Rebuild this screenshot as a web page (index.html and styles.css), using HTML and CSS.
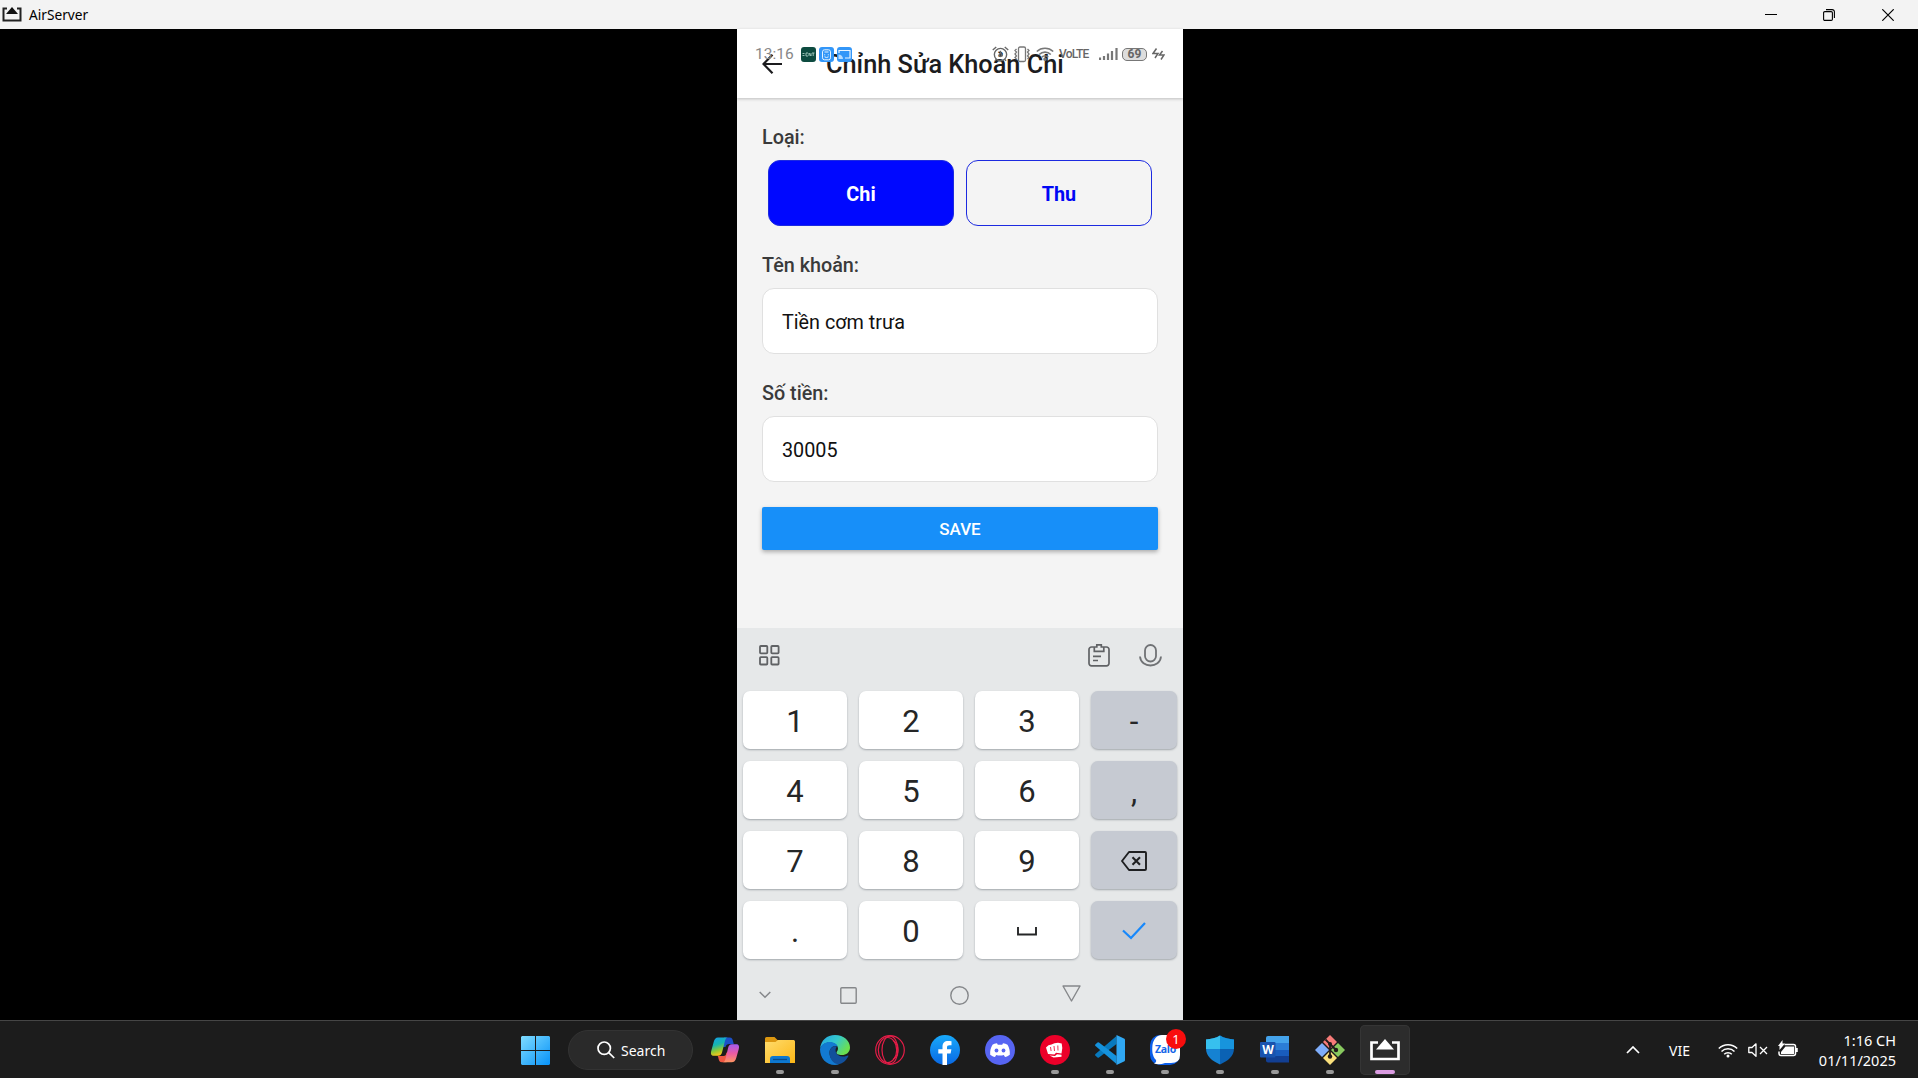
FILE: index.html
```html
<!DOCTYPE html>
<html lang="vi">
<head>
<meta charset="utf-8">
<title>AirServer</title>
<link rel="stylesheet" href="styles.css">
</head>
<body>
<header class="titlebar">
  <svg class="titlebar-logo" width="20" height="15" viewBox="0 0 20 15"><path d="M5 1.5H1.5v12h17v-12H15" fill="none" stroke="#222" stroke-width="2"/><path d="M10 0l6 7H4z" fill="#111"/></svg>
  <span class="titlebar-name">AirServer</span>
  <div class="window-controls">
    <svg width="12" height="12" viewBox="0 0 12 12"><path d="M0 5.5h12" stroke="#000"/></svg>
    <svg width="12" height="12" viewBox="0 0 12 12" fill="none" stroke="#000" stroke-width="1.1"><rect x=".6" y="2.6" width="8.8" height="8.8" rx="1.2"/><path d="M3 .6h6.200a2.200 2.200 0 0 1 2.200 2.200V9"/></svg>
    <svg width="12" height="12" viewBox="0 0 12 12"><path d="M.3.3l11.4 11.4M11.700.3L.3 11.700" stroke="#000" stroke-width="1.2"/></svg>
  </div>
</header>

<main class="stage">
  <section class="phone">
    <div class="app-header">
      <svg class="back" width="20" height="20" viewBox="0 0 20 20" fill="none" stroke="#1c1c1e" stroke-width="2.200"><path d="M20 10H2M10.500.8L1.500 10l9 9.200"/></svg>
      <h1 class="app-title">Chỉnh Sửa Khoản Chi</h1>
      <div class="status">
        <span class="status-time">13:16</span>
        <div class="status-apps">
          <svg width="15" height="15" viewBox="0 0 15 15"><rect width="15" height="15" rx="3" fill="#0d4b40"/><path d="M1.500 6.500h2M1.500 8.500h2M5 6v3M5 6h2M5 9h2M8 9V6l2 3V6M11 6h2.500M12.200 6v3" stroke="#a9cfc4" stroke-width=".9" fill="none"/></svg>
          <svg width="15" height="15" viewBox="0 0 15 15"><rect width="15" height="15" rx="3" fill="#3296f8"/><path d="M5.500 2.800h4a2 2 0 0 1 2 2v6a2 2 0 0 1-2 2h-4a2 2 0 0 1-2-2v-6a2 2 0 0 1 2-2zM5.500 5h4M5.700 7.300v1M9.300 7.300v1M5.500 9.800q2 1.500 4 0" fill="none" stroke="#e8f4ff"/></svg>
          <svg width="15" height="15" viewBox="0 0 15 15"><rect width="15" height="15" rx="3" fill="#3296f8"/><path d="M2 6V3.500h11V11H8" fill="none" stroke="#e8f4ff" stroke-width="1.200"/><path d="M1.500 7.500a4.500 4.500 0 0 1 4.500 4.500H1.500z" fill="#b7dcff"/></svg>
        </div>
        <div class="status-icons">
          <svg width="17" height="16" viewBox="0 0 16 15" fill="none" stroke="#666" stroke-width="1.300"><circle cx="8" cy="8" r="5.800"/><path d="M.7 3.800L4 1M15.300 3.800L12 1M8 4.500V8l2 1.500M4 12.500L2.800 14M12 12.500l1.200 1.500"/><circle cx="8" cy="8.500" r="1.300" fill="#333"/></svg>
          <svg width="16" height="17" viewBox="0 0 16 17" fill="none" stroke="#777" stroke-width="1.300"><rect x="4.500" y="1" width="7" height="14.500" rx="1.500"/><path d="M2.500 3L1 4.500 2.500 6 1 8l1.500 2L1 11.500 2.500 13M13.500 3L15 4.500 13.500 6 15 8l-1.500 2 1.500 1.500-1.500 1.500"/></svg>
          <svg width="18" height="14" viewBox="0 0 18 14" fill="none" stroke="#777" stroke-width="1.600"><path d="M.8 4.500a12 12 0 0 1 16.400 0M3.200 7.500a8.300 8.300 0 0 1 11.600 0M5.800 10.200a4.700 4.700 0 0 1 6.400 0"/><circle cx="9" cy="12.200" r="1" fill="#666"/></svg>
          <span class="volte">VoLTE</span>
          <svg class="signal" width="19" height="12" viewBox="0 0 19 12" stroke="#777" stroke-width="2.200"><path d="M1 12V9.500M5 12V8M9 12V5.500M13 12V3M17.500 12V0"/></svg>
          <span class="battery">69</span>
          <svg class="bolt" width="13" height="12" viewBox="0 0 13 12" fill="none" stroke="#666" stroke-width="1.500"><path d="M4.500.5L1 5.500h5L3 10M10.500 3L7.500 7h4.500l-3 4.500"/></svg>
        </div>
      </div>
    </div>

    <div class="form">
      <div class="label">Loại:</div>
      <div class="types">
        <button class="type type-on">Chi</button>
        <button class="type">Thu</button>
      </div>
      <div class="label">Tên khoản:</div>
      <div class="field">Tiền cơm trưa</div>
      <div class="label">Số tiền:</div>
      <div class="field">30005</div>
      <button class="save">SAVE</button>
    </div>

    <div class="keyboard">
      <div class="kb-tools">
        <svg width="21" height="21" viewBox="0 0 21 21" fill="none" stroke="#606265" stroke-width="1.800"><rect x="1" y="1" width="7.300" height="7.300" rx=".8"/><rect x="12.300" y="1" width="7.300" height="7.300" rx=".8"/><rect x="1" y="12.200" width="7.300" height="7.300" rx=".8"/><rect x="12.300" y="12.200" width="7.300" height="7.300" rx=".8"/></svg>
        <svg class="clip" width="22" height="23" viewBox="0 0 22 23" fill="none" stroke="#606265" stroke-width="1.700"><path d="M6 3H3.500A2.500 2.500 0 0 0 1 5.500v13.800a2.500 2.500 0 0 0 2.500 2.500h15a2.500 2.500 0 0 0 2.500-2.500V5.500A2.500 2.500 0 0 0 18.500 3H16M6.300 7.300V3h2.500V.8h4.500V3h2.500v4.300zM5 12.300h8M5 16.500h5"/></svg>
        <svg width="23" height="23" viewBox="0 0 23 23" fill="none" stroke="#707275" stroke-width="1.800"><rect x="6" y="1" width="11" height="16.500" rx="5.500"/><path d="M1 12.500c1 12 20 12 21 0"/></svg>
      </div>
      <div class="keys">
        <div class="key">1</div><div class="key">2</div><div class="key">3</div><div class="key key-side">-</div>
        <div class="key">4</div><div class="key">5</div><div class="key">6</div><div class="key key-side">,</div>
        <div class="key">7</div><div class="key">8</div><div class="key">9</div>
        <div class="key key-side key-icon"><svg width="26" height="20" viewBox="0 0 26 20" fill="none" stroke="#1e1f21" stroke-width="1.900"><path d="M8 1h16a1 1 0 0 1 1 1v16a1 1 0 0 1-1 1H8l-7-9z" stroke-linejoin="round"/><path d="M11.500 6.300l7.500 7.500M19 6.300l-7.500 7.500" stroke-width="2.100"/></svg></div>
        <div class="key">.</div><div class="key">0</div>
        <div class="key key-icon"><svg width="20" height="9" viewBox="0 0 20 9"><path d="M1 0v7.500h18V0" fill="none" stroke="#252627" stroke-width="1.900"/></svg></div>
        <div class="key key-side key-icon"><svg width="24" height="18" viewBox="0 0 24 18"><path d="M1 8.500l8 7.500L23 1" fill="none" stroke="#1788fb" stroke-width="2.200"/></svg></div>
      </div>
      <div class="nav">
        <svg width="12" height="8" viewBox="0 0 12 8"><path d="M.7 1L6 6.300 11.300 1" fill="none" stroke="#85878a" stroke-width="1.500"/></svg>
        <svg class="nav-square" width="17" height="17" viewBox="0 0 17 17"><rect x=".8" y=".8" width="15.400" height="15.400" rx="1" fill="none" stroke="#85878a" stroke-width="1.400"/></svg>
        <svg class="nav-circle" width="19" height="19" viewBox="0 0 19 19"><circle cx="9.500" cy="9.500" r="8.700" fill="none" stroke="#85878a" stroke-width="1.400"/></svg>
        <svg class="nav-tri" width="19" height="17" viewBox="0 0 19 17"><path d="M1 1h17L9.500 16z" fill="none" stroke="#85878a" stroke-width="1.400" stroke-linejoin="round"/></svg>
      </div>
    </div>
  </section>
</main>

<footer class="taskbar">
  <div class="start">
    <svg width="29" height="29" viewBox="0 0 29 29"><defs><linearGradient id="win" x2="1" y2="1"><stop stop-color="#7fdcff"/><stop offset="1" stop-color="#0792f8"/></linearGradient></defs><path d="M1 0h13v14H0V1zM15 0h13l1 1v13H15zM0 15h14v14H1l-1-1zM15 15h14v13l-1 1H15z" fill="url(#win)"/></svg>
  </div>
  <div class="search">
    <svg width="18" height="18" viewBox="0 0 18 18" fill="none" stroke="#fff" stroke-width="1.700"><circle cx="7.200" cy="7.200" r="6.200"/><path d="M11.700 11.700l5.500 5.300"/></svg>
    <span>Search</span>
  </div>
  <div class="apps">
    <div class="app"><svg width="30" height="30" viewBox="0 0 30 30"><defs><linearGradient id="cpa" x2=".3" y2="1"><stop stop-color="#159de8"/><stop offset=".45" stop-color="#16b5b0"/><stop offset=".75" stop-color="#8cc936"/><stop offset="1" stop-color="#f4c51c"/></linearGradient><linearGradient id="cpb" x2="0" y2="1"><stop stop-color="#a25bf0"/><stop offset=".5" stop-color="#ea5aa4"/><stop offset="1" stop-color="#fd9560"/></linearGradient></defs><path d="M14 2.500h5.500c2.500 0 3 1.500 3.600 4l.7 2.500h-4.300c-2.500 0-3.500 1-4 3h-3z" fill="#1c50c8"/><path d="M7.500 21h6c2 0 2.500-1 3-3.500L18 18l-1.500 9.300H12c-2.500 0-3-1.800-3.500-3.800-.3-1.500-.4-2.200-1-2.500z" fill="#ef5742"/><path d="M8 2.500h10c-2 0-2.700 2-3.300 4.500l-2.500 9.700c-.6 2.500-1.700 4-4 4H4c-3 0-3.500-2-2.700-5l2.400-8.700c.8-3 2-4.500 4.300-4.500z" fill="url(#cpa)"/><path d="M21.500 27.300H12.500c2 0 2.700-2 3.300-4.500l2.200-9.500c.6-2.500 1.700-4 4-4H26c3 0 3.500 2 2.700 5l-2.400 8.500c-.8 3-2.200 4.500-4.800 4.500z" fill="url(#cpb)"/></svg></div>
    <div class="app open"><svg width="30" height="30" viewBox="0 0 30 30"><defs><linearGradient id="fold" x2="1" y2="1"><stop stop-color="#ffdc6d"/><stop offset="1" stop-color="#fcb716"/></linearGradient></defs><path d="M0 3.500Q0 2 1.500 2h8l3 3H29v6H0z" fill="#dc9710"/><path d="M0 7h10.500l2.500-2h15.500Q30 5 30 6.500V28H0z" fill="url(#fold)"/><path d="M5 28v-4q0-3 3-3h14q3 0 3 3v4z" fill="#0d78d0"/><path d="M8 24.500h14" stroke="#084b8a" stroke-width="1.300"/></svg></div>
    <div class="app open"><svg width="30" height="30" viewBox="0 0 30 30"><defs><linearGradient id="edge" x2="1" y2=".5"><stop stop-color="#22a4e5"/><stop offset=".55" stop-color="#35c9cb"/><stop offset="1" stop-color="#6bdf50"/></linearGradient></defs><path d="M0 14C1 5 7 0 15 0c9 0 15 6 15 12.500 0 5-4 7.500-8 7.500-4 0-5.500-1-5.500-2.300s1.500-1.700 1.500-4.200C18 10 14 7.500 9.500 7.500 5 7.500 1.500 10 0 14z" fill="url(#edge)"/><path d="M0 14C1.500 9 5.500 7 9.500 7c4 0 7.200 1.700 8.200 4.500-4-1.500-8.200 1.500-8.200 6.500 0 5.500 5 10.500 10 11-1.500.7-3 1-4.500 1C6 30 0 23 0 14z" fill="#127ad1"/><path d="M9.500 17c.2-3.800 4-6.500 7.500-5.500-3 3-1.500 10 6 10 2.500 0 4-.7 4.800-1 .8 0 .7.500.3 1.200C25.500 26 22.500 29 18 29c-5 0-8.700-6-8.500-12z" fill="#12509b"/></svg></div>
    <div class="app"><svg width="30" height="30" viewBox="0 0 30 30" fill="none" stroke="#e51d48" stroke-width="1.200"><circle cx="15" cy="15" r="14.300"/><ellipse cx="12.500" cy="15" rx="9.200" ry="12.500"/><ellipse cx="15" cy="15" rx="8" ry="13.800"/><path d="M18 5.500c6.500 4 6.500 15 0 19"/></svg></div>
    <div class="app"><svg width="30" height="30" viewBox="0 0 30 30"><defs><linearGradient id="fb" x2="0" y2="1"><stop stop-color="#18a9fa"/><stop offset="1" stop-color="#0968e4"/></linearGradient></defs><circle cx="15" cy="15" r="15" fill="url(#fb)"/><path d="M12.500 30V18.500H8.300v-4.200h4.200V12c0-4.200 2-6 5.700-6 1.500 0 2.800.1 3.300.3v4h-2c-2 0-2.500.8-2.500 2.200v1.800h4.400l-.8 4.200H17V30z" fill="#fff"/></svg></div>
    <div class="app"><svg width="30" height="30" viewBox="0 0 30 30"><circle cx="15" cy="15" r="15" fill="#5765f2"/><path d="M12 8.300c-2 .3-3.300.8-4.500 1.400C5.500 13 5 16 5.200 19.700c1.500 1.200 3.200 1.900 4.800 2.300l1.200-2c2.500.7 5.100.7 7.600 0l1.200 2c1.600-.4 3.300-1.100 4.800-2.300.3-3.700-.5-7-2.300-10-1.200-.6-2.800-1.200-4.500-1.400l-.8 1.400h-4.400z" fill="#fff"/><ellipse cx="11.500" cy="15.500" rx="1.900" ry="2.100" fill="#5765f2"/><ellipse cx="18.500" cy="15.500" rx="1.900" ry="2.100" fill="#5765f2"/></svg></div>
    <div class="app open"><svg width="30" height="30" viewBox="0 0 30 30"><circle cx="15" cy="15" r="15" fill="#ec0029"/><path d="M6 12.500l2.500-2.300 3-.7 3-1.200 3.500-.6 3.700.8.6 4.500-.8 5.500-5.500-.8-1.500 1.800-6.500-.5z" fill="#fff"/><path d="M9.500 20.500l5.500.5 2-1.800 4.500.6v2l-5 .4-3 .3z" fill="#fff"/><path d="M10.500 12l.6 4M14 11l.5 5M17.800 10.500l.2 5" stroke="#ec0029" stroke-width=".8" fill="none"/></svg></div>
    <div class="app open"><svg width="30" height="30" viewBox="0 0 30 30"><path d="M21.500 1v8L4 22.500Q3.300 23 2.500 22.500L.5 20.700q-.8-.8 0-1.700z" fill="#0879bd"/><path d="M21.500 29v-8L4 7.500Q3.300 7 2.500 7.500L.5 9.300q-.8.800 0 1.700z" fill="#1592dc"/><path d="M21.500 0L29 3.500q1 .4 1 1.500v20q0 1-1 1.500L21.500 30z" fill="#30a8f3"/></svg></div>
    <div class="app open zalo"><svg width="30" height="30" viewBox="0 0 30 30"><rect width="30" height="30" rx="10" fill="#0b5eea"/><path d="M12 0h9q9 0 9 9v11q0 8-9 8h-6c-4 1.500-8 1.500-11 .5 2-.7 2.500-2 2-3.500C2 21 2 15 2.500 10 3.500 4 7 0 12 0z" fill="#fff"/></svg><span class="zalo-name">Zalo</span><span class="badge">1</span></div>
    <div class="app open"><svg width="30" height="30" viewBox="0 0 30 30"><path d="M15 .5C11 3 6 4.200 1 4.500v9C1 21 7 26 15 29.500z" fill="#1582d2"/><path d="M15 .5c4 2.500 9 3.700 14 4v9C29 21 23 26 15 29.500z" fill="#0b62b4"/><path d="M15 .5C11 3 6 4.200 1 4.500V14h14z" fill="#37c0ee"/><path d="M15 .5c4 2.500 9 3.700 14 4V14H15z" fill="#1794dd"/></svg></div>
    <div class="app open word"><svg width="30" height="30" viewBox="0 0 30 30"><path d="M8 1h21v8H6V3q0-2 2-2z" fill="#44a3eb"/><path d="M6 8h23v7H6z" fill="#2b7dd7"/><path d="M6 15h23v7H6z" fill="#195cbd"/><path d="M6 21h23v6.500H8q-2 0-2-2z" fill="#123f93"/><rect y="7" width="15.500" height="15.500" rx="1" fill="#1953ae"/></svg><span class="word-w">W</span></div>
    <div class="app open"><svg width="30" height="30" viewBox="0 0 30 30"><path d="M15 0l7 7-7 7-7-7z" fill="#f77b78"/><path d="M7 8l7 7-7 7-7-7z" fill="#7eadfa"/><path d="M23 8l7 7-7 7-7-7z" fill="#88c95f"/><path d="M15 16l7 7-7 7-7-7z" fill="#fae07c"/><path d="M10.500 4.500L15 9v12M15 9l6 6" fill="none" stroke="#221a1a" stroke-width="1.800"/><circle cx="15" cy="9" r="2" fill="#221a1a"/><circle cx="21" cy="15" r="2.200" fill="#221a1a"/><circle cx="15" cy="21.500" r="2.200" fill="#221a1a"/></svg></div>
    <div class="app open active"><svg width="30" height="24" viewBox="0 0 30 24"><path d="M8 4.500H1.500V21h27V4.500H22" fill="none" stroke="#fff" stroke-width="2.700"/><path d="M15 1l9 10.500H6z" fill="#fff"/></svg></div>
  </div>
  <div class="tray">
    <svg class="tray-up" width="14" height="8" viewBox="0 0 14 8"><path d="M1 7l6-6 6 6" fill="none" stroke="#fff" stroke-width="1.700"/></svg>
    <span class="lang">VIE</span>
    <svg class="wifi" width="20" height="15" viewBox="0 0 20 15" fill="none" stroke="#fff" stroke-width="1.500"><path d="M.8 5.500a13 13 0 0 1 18.400 0M3.500 8.500a9.200 9.200 0 0 1 13 0M6.200 11.200a5.400 5.400 0 0 1 7.600 0"/><circle cx="10" cy="13" r="1.500" fill="#fff" stroke="none"/></svg>
    <svg class="mute" width="20" height="14" viewBox="0 0 20 14" fill="none" stroke="#fff" stroke-width="1.300"><path d="M.8 4.500v5H4l4 3.700V.8l-4 3.700z" stroke-linejoin="round"/><path d="M12 4l7 7M19 4l-7 7"/></svg>
    <svg class="power" width="20" height="17" viewBox="0 0 20 17"><path d="M6.500 4.500h9a2 2 0 0 1 2 2v7a2 2 0 0 1-2 2H3a2 2 0 0 1-2-2v-2M19 8v4" fill="none" stroke="#fff" stroke-width="1.500"/><path d="M7.500 6.500h8.500v7.500H3v-2z" fill="#fff"/><path d="M4.500 0v3.500H7L1.500 10V6H0z" fill="#fff"/></svg>
    <div class="clock"><span>1:16 CH</span><span>01/11/2025</span></div>
  </div>
</footer>
</body>
</html>
```

FILE: styles.css
```css
* { box-sizing: border-box; }

body {
  margin: 0;
  width: 1918px;
  height: 1078px;
  display: flex;
  flex-direction: column;
  overflow: hidden;
  background: #000;
  font-family: Roboto, "Noto Sans", sans-serif;
}

svg { display: block; flex: none; }
button { font-family: inherit; padding: 0; margin: 0; }

/* Window title bar */
.titlebar {
  height: 29px;
  flex: none;
  display: flex;
  align-items: center;
  background: #f3f3f3;
  padding: 0 24px 0 2px;
  color: #000;
}
.titlebar-name {
  margin-left: 7px;
  padding-top: 1px;
  font: 13.7px/28px "Noto Sans", sans-serif;
}
.window-controls { margin-left: auto; display: flex; gap: 47px; }
.window-controls svg:first-child { margin-right: -1px; }

/* Mirrored phone */
.stage {
  flex: 1;
  display: flex;
  justify-content: center;
  padding-left: 2px;
  min-height: 0;
}
.phone {
  width: 446px;
  display: flex;
  flex-direction: column;
  background: #f4f4f4;
}
.app-header {
  position: relative;
  height: 69px;
  flex: none;
  display: flex;
  background: #fff;
  box-shadow: 0 1px 3px rgba(0, 0, 0, .22);
  padding-left: 25px;
}
.back { margin-top: 25px; }
.app-title {
  margin: 21px 0 0 44px;
  font-size: 25.3px;
  line-height: 30px;
  font-weight: 500;
  color: #1c1c1e;
  white-space: nowrap;
}
.status {
  position: absolute;
  top: 14px;
  left: 18px;
  right: 18px;
  height: 22px;
  display: flex;
  align-items: center;
  color: #777;
}
.status-time { width: 46px; font-size: 15.500px; color: #888; }
.status-apps { display: flex; gap: 3px; }
.status-icons { margin-left: auto; display: flex; align-items: center; }
.status-icons svg:nth-child(2) { margin-left: 5px; }
.status-icons svg:nth-child(3) { margin-left: 6px; }
.volte { margin-left: 5px; width: 28px; font-size: 12px; font-weight: 500; letter-spacing: -.8px; color: #666; }
.signal { margin-left: 12px; }
.battery {
  margin-left: 4px;
  width: 25px;
  height: 13px;
  border: 1.500px solid #777;
  border-radius: 5px;
  background: #ddd;
  font-size: 12px;
  line-height: 11px;
  font-weight: 700;
  text-align: center;
  color: #666;
}
.bolt { margin-left: 5px; }

.form {
  flex: 1;
  display: flex;
  flex-direction: column;
  padding: 28px 25px 0 25px;
}
.label {
  height: 24px;
  line-height: 24px;
  font-size: 19.800px;
  font-weight: 500;
  color: #3a3a3a;
}
.types {
  display: flex;
  gap: 12px;
  margin: 10px 6px 28px;
}
.type {
  flex: 1;
  height: 66px;
  padding-top: 2px;
  border: 1px solid #1c2ae0;
  border-radius: 12px;
  background: transparent;
  color: #0008f5;
  font-size: 19.800px;
  font-weight: 700;
}
.type-on { background: #0008ff; color: #fff; }
.field {
  height: 66px;
  margin: 10px 0 28px;
  padding-left: 19px;
  border: 1px solid #e0e0e0;
  border-radius: 12px;
  background: #fff;
  font-size: 19.800px;
  line-height: 67px;
  color: #111;
}
.save {
  height: 43px;
  margin-top: -3px;
  border: 0;
  border-radius: 2px;
  background: #178ff9;
  box-shadow: 0 2px 4px rgba(0, 0, 0, .3);
  color: #fff;
  font-size: 17px;
  font-weight: 500;
}

/* Numeric keyboard */
.keyboard {
  height: 392px;
  flex: none;
  background: #e6e8e9;
}
.kb-tools {
  height: 63px;
  display: flex;
  align-items: center;
  padding: 0 21px 9px 22px;
}
.clip { margin-left: auto; margin-right: 29px; }
.keys {
  display: grid;
  grid-template-columns: 104px 104px 104px 86px;
  grid-auto-rows: 58px;
  gap: 12px;
  padding-left: 6px;
}
.key {
  display: flex;
  align-items: center;
  justify-content: center;
  border-radius: 7px;
  background: #fff;
  box-shadow: 0 1px 2px rgba(60, 70, 80, .4);
  font-size: 31px;
  line-height: 56px;
  padding-top: 4px;
  color: #252627;
}
.key-icon { padding-top: 2px; }
.key-side { background: #c6cad2; }
.nav {
  display: flex;
  align-items: center;
  height: 72px;
  padding-left: 22px;
}
.nav-square { margin-left: 69px; }
.nav-circle { margin-left: 93px; }
.nav-tri { margin-left: 93px; margin-bottom: 4px; }

/* Windows taskbar */
.taskbar {
  height: 58px;
  flex: none;
  display: flex;
  align-items: center;
  border-top: 1px solid #454545;
  background: #1c1c1c;
  color: #fff;
  font-family: "Noto Sans", sans-serif;
  padding: 1px 23px 0 521px;
}
.start { width: 47px; }
.search {
  width: 125px;
  height: 40px;
  display: flex;
  align-items: center;
  gap: 6px;
  padding-left: 28px;
  border: 1px solid #333;
  border-radius: 20px;
  background: #2a2a2a;
  font-size: 14px;
}
.apps { display: flex; margin-left: 7px; }
.app {
  position: relative;
  width: 50px;
  height: 50px;
  margin-right: 5px;
  display: flex;
  align-items: center;
  justify-content: center;
  border-radius: 5px;
}
.open::after {
  content: "";
  position: absolute;
  bottom: 1px;
  left: 21px;
  width: 8px;
  height: 4px;
  border-radius: 2px;
  background: #999;
}
.active { background: #2c2c2c; box-shadow: inset 0 0 0 1px #353535; }
.active::after { left: 15px; width: 20px; background: #db9ce2; }
.zalo-name {
  position: absolute;
  left: 15px;
  top: 17px;
  font: 700 10.5px/14px "Open Sans", sans-serif;
  letter-spacing: -.3px;
  color: #1466e8;
}
.badge {
  position: absolute;
  left: 26px;
  top: 4px;
  width: 20px;
  height: 20px;
  border-radius: 50%;
  background: #f90d0d;
  font-size: 13px;
  line-height: 20px;
  text-align: center;
}
.word-w {
  position: absolute;
  left: 10px;
  top: 17px;
  width: 16px;
  font: 700 12px/16px "Open Sans", sans-serif;
  text-align: center;
}
.tray { margin-left: auto; display: flex; align-items: center; }
.lang { width: 22px; margin-left: 29px; font-size: 14px; }
.wifi { margin-left: 27px; }
.mute { margin-left: 10px; }
.power { margin-left: 10px; margin-bottom: 3px; }
.clock {
  width: 98px;
  margin-right: -1px;
  display: flex;
  flex-direction: column;
  align-items: flex-end;
  font-size: 14.500px;
  line-height: 20px;
}
```
